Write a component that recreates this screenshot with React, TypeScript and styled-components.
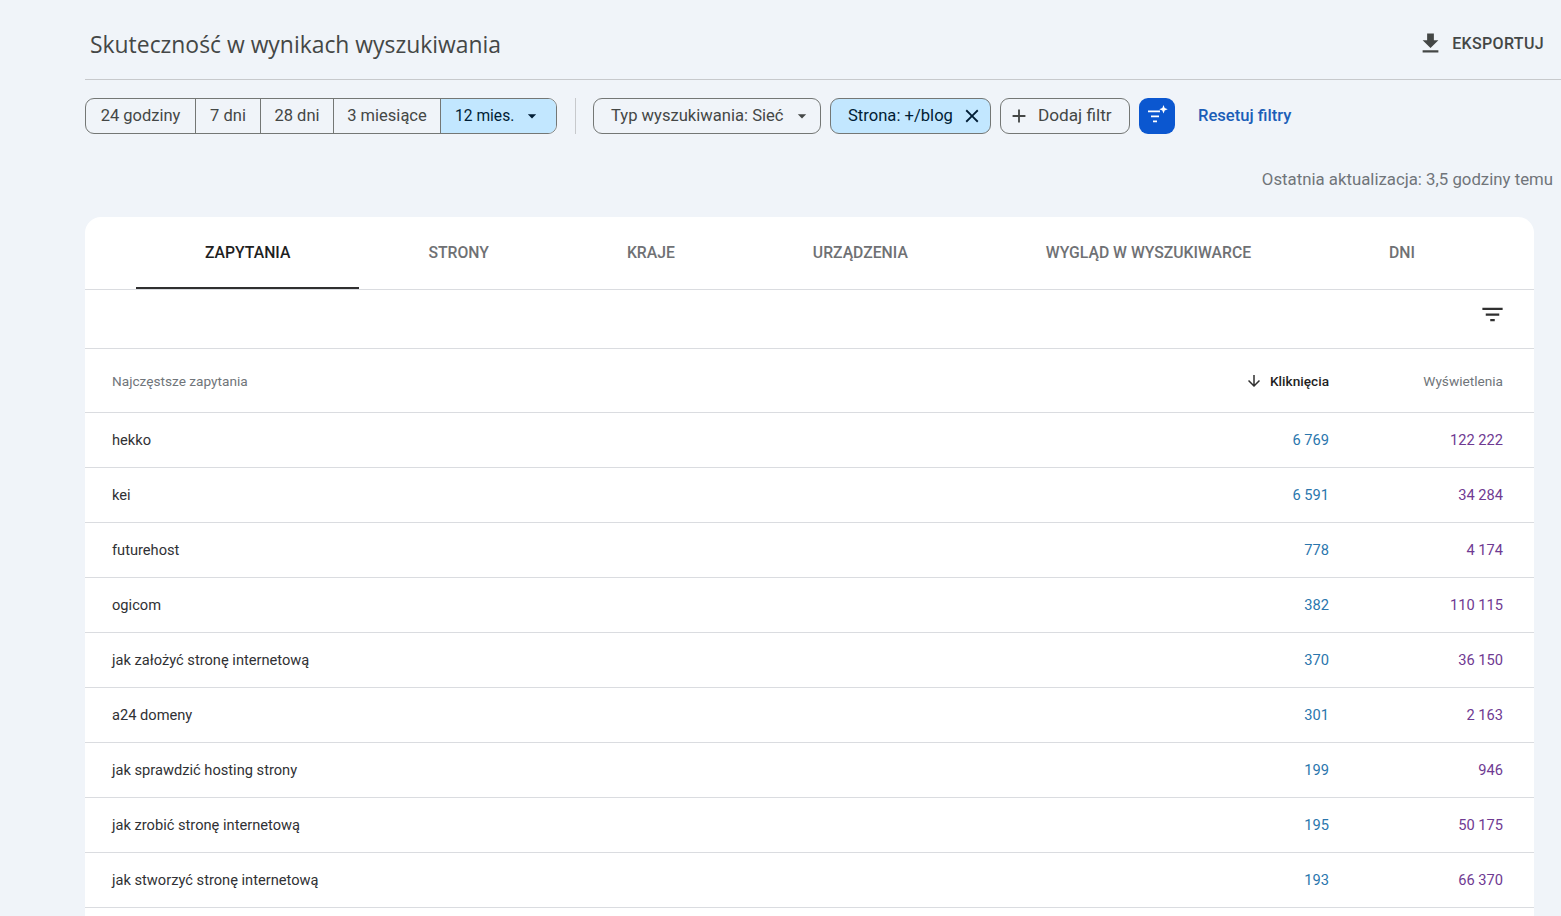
import styled, { createGlobalStyle } from 'styled-components'

const GlobalStyle = createGlobalStyle`
  html, body {
    margin: 0;
    height: 100%;
    overflow: hidden;
    background: #f0f4f9;
    font-family: Roboto, "Liberation Sans", sans-serif;
  }
`

const Page = styled.div`
  margin-left: 85px;
  height: 916px;
  display: flex;
  flex-direction: column;
`

const Header = styled.header`
  height: 80px;
  box-sizing: border-box;
  padding: 9px 17px 0 5px;
  border-bottom: 1px solid #c7c9cc;
  display: flex;
  align-items: center;
  justify-content: space-between;
  flex-shrink: 0;
`

const Title = styled.h1`
  margin: 0;
  font: 400 22.9px "Open Sans", sans-serif;
  color: #444746;
`

const ExportButton = styled.div`
  display: flex;
  align-items: center;
  gap: 8px;
  margin-top: -2px;
  font-size: 16px;
  font-weight: 500;
  letter-spacing: 0.35px;
  color: #444746;

  svg {
    width: 27px;
    height: 27px;
    fill: #444746;
  }
`

const FilterBar = styled.div`
  display: flex;
  align-items: center;
  margin-top: 18px;
  height: 36px;
  flex-shrink: 0;
`

const RangeGroup = styled.div`
  display: flex;
  height: 36px;
  box-sizing: border-box;
  border: 1px solid #747775;
  border-radius: 9px;
  overflow: hidden;
`

const RangeItem = styled.div<{ $width: number; $active?: boolean }>`
  width: ${(p) => p.$width}px;
  box-sizing: border-box;
  display: flex;
  align-items: center;
  justify-content: ${(p) => (p.$active ? 'flex-start' : 'center')};
  padding: ${(p) => (p.$active ? '0 0 0 14px' : '0 0 2px')};
  gap: 8px;
  font-size: ${(p) => (p.$active ? '15.6px' : '16.5px')};
  color: ${(p) => (p.$active ? '#001d35' : '#444746')};
  background: ${(p) => (p.$active ? '#c2e7ff' : 'transparent')};
  border-left: 1px solid #747775;

  &:first-child {
    border-left: none;
  }
`

const Divider = styled.div`
  width: 1px;
  height: 36px;
  background: #c7c9cc;
  margin: 0 17px 0 18px;
`

const Chip = styled.div<{ $width: number; $active?: boolean; $tight?: boolean }>`
  width: ${(p) => p.$width}px;
  height: 36px;
  box-sizing: border-box;
  margin-right: 9px;
  padding: 0 0 2px ${(p) => (p.$tight ? '7px' : '17px')};
  border: 1px solid #747775;
  border-radius: 9px;
  display: flex;
  align-items: center;
  gap: 8px;
  font-size: ${(p) => (p.$tight ? '17.2px' : '16.6px')};
  color: ${(p) => (p.$active ? '#001d35' : '#444746')};
  background: ${(p) => (p.$active ? '#c2e7ff' : 'transparent')};

  svg {
    margin-top: 2px;
  }
`

const Caret = styled.svg`
  width: 20px;
  height: 20px;
  fill: currentColor;
  flex-shrink: 0;
`

const ChipIcon = styled.svg`
  width: 22px;
  height: 22px;
  fill: currentColor;
  flex-shrink: 0;
`

const AiButton = styled.div`
  width: 36px;
  height: 36px;
  border-radius: 9px;
  background: #0b57d0;
  display: flex;
  align-items: center;
  justify-content: center;

  svg {
    width: 24px;
    height: 24px;
    fill: #ffffff;
  }
`

const ResetLink = styled.a`
  margin-left: 23px;
  padding-bottom: 2px;
  font-size: 16.6px;
  font-weight: 500;
  color: #1b5eb8;
`

const UpdatedNote = styled.div`
  margin-top: 35px;
  padding-right: 8px;
  text-align: right;
  font-size: 16.8px;
  line-height: 20px;
  color: #70757a;
  flex-shrink: 0;
`

const Card = styled.section`
  margin-top: 28px;
  width: 1449px;
  flex: 1;
  background: #ffffff;
  border-radius: 16px 16px 0 0;
`

const Tabs = styled.nav`
  display: flex;
  height: 73px;
  box-sizing: border-box;
  padding-left: 51px;
  border-bottom: 1px solid #dadce0;
`

const Tab = styled.div<{ $active?: boolean }>`
  height: 72px;
  box-sizing: border-box;
  padding: 0 69px;
  display: flex;
  align-items: center;
  font-size: 15.76px;
  font-weight: 500;
  color: ${(p) => (p.$active ? '#1f1f1f' : '#6f7174')};
  border-bottom: 2px solid ${(p) => (p.$active ? '#303030' : 'transparent')};
`

const Toolbar = styled.div`
  height: 59px;
  box-sizing: border-box;
  padding: 11px 28px 0 0;
  border-bottom: 1px solid #dadce0;
  display: flex;
  justify-content: flex-end;
  align-items: flex-start;

  svg {
    width: 27px;
    height: 27px;
    fill: #303030;
  }
`

const TableHead = styled.div`
  height: 64px;
  box-sizing: border-box;
  padding: 0 31px 0 27px;
  border-bottom: 1px solid #dadce0;
  display: grid;
  grid-template-columns: 1fr 220px 174px;
  align-items: center;
  font-size: 13.65px;
  color: #70757a;
`

const ActiveHead = styled.div`
  display: flex;
  align-items: center;
  justify-content: flex-end;
  gap: 7px;
  font-weight: 500;
  color: #1f1f1f;

  svg {
    width: 18px;
    height: 18px;
    fill: #303030;
  }
`

const NumberHead = styled.div`
  text-align: right;
`

const Row = styled.div`
  height: 55px;
  box-sizing: border-box;
  padding: 0 31px 0 27px;
  border-bottom: 1px solid #dadce0;
  display: grid;
  grid-template-columns: 1fr 220px 174px;
  align-items: center;
  font-size: 14.65px;
  color: #303134;
`

const Clicks = styled.div`
  text-align: right;
  color: #2a76ad;
`

const Impressions = styled.div`
  text-align: right;
  color: #6f3a92;
`

const rows = [
  ['hekko', '6\u00a0769', '122\u00a0222'],
  ['kei', '6\u00a0591', '34\u00a0284'],
  ['futurehost', '778', '4\u00a0174'],
  ['ogicom', '382', '110\u00a0115'],
  ['jak założyć stronę internetową', '370', '36\u00a0150'],
  ['a24 domeny', '301', '2\u00a0163'],
  ['jak sprawdzić hosting strony', '199', '946'],
  ['jak zrobić stronę internetową', '195', '50\u00a0175'],
  ['jak stworzyć stronę internetową', '193', '66\u00a0370'],
]

const tabs = ['ZAPYTANIA', 'STRONY', 'KRAJE', 'URZĄDZENIA', 'WYGLĄD W WYSZUKIWARCE', 'DNI']

export default function App() {
  return (
    <Page>
      <GlobalStyle />
      <Header>
        <Title>Skuteczność w wynikach wyszukiwania</Title>
        <ExportButton>
          <svg viewBox="0 0 24 24"><path d="M5 20h14v-2H5v2zM19 9h-4V3H9v6H5l7 7 7-7z" /></svg>
          EKSPORTUJ
        </ExportButton>
      </Header>

      <FilterBar>
        <RangeGroup>
          <RangeItem $width={109}>24 godziny</RangeItem>
          <RangeItem $width={65}>7 dni</RangeItem>
          <RangeItem $width={73}>28 dni</RangeItem>
          <RangeItem $width={107}>3 miesiące</RangeItem>
          <RangeItem $width={116} $active>
            12 mies.
            <Caret viewBox="0 0 24 24"><path d="M7 10l5 5 5-5z" /></Caret>
          </RangeItem>
        </RangeGroup>
        <Divider />
        <Chip $width={228}>
          Typ wyszukiwania: Sieć
          <Caret viewBox="0 0 24 24"><path d="M7 10l5 5 5-5z" /></Caret>
        </Chip>
        <Chip $width={161} $active>
          Strona: +/blog
          <ChipIcon viewBox="0 0 24 24"><path d="M19 6.41L17.59 5 12 10.59 6.41 5 5 6.41 10.59 12 5 17.59 6.41 19 12 13.41 17.59 19 19 17.59 13.41 12z" /></ChipIcon>
        </Chip>
        <Chip $width={130} $tight>
          <ChipIcon viewBox="0 0 24 24"><path d="M19 13h-6v6h-2v-6H5v-2h6V5h2v6h6v2z" /></ChipIcon>
          Dodaj filtr
        </Chip>
        <AiButton>
          <svg viewBox="0 0 24 24">
            <path d="M3 6.5h12v1.8H3zM6 11.5h8v1.8H6zM8 16.5h4v1.8H8z" />
            <path d="M18.5 1l1.2 3 3 1.2-3 1.2-1.2 3-1.2-3-3-1.2 3-1.2z" />
          </svg>
        </AiButton>
        <ResetLink>Resetuj filtry</ResetLink>
      </FilterBar>

      <UpdatedNote>Ostatnia aktualizacja: 3,5 godziny temu</UpdatedNote>

      <Card>
        <Tabs>
          {tabs.map((tab, i) => (
            <Tab key={tab} $active={i === 0}>{tab}</Tab>
          ))}
        </Tabs>
        <Toolbar>
          <svg viewBox="0 0 24 24"><path d="M10 18h4v-2h-4v2zM3 6v2h18V6H3zm3 7h12v-2H6v2z" /></svg>
        </Toolbar>
        <TableHead>
          <div>Najczęstsze zapytania</div>
          <ActiveHead>
            <svg viewBox="0 0 24 24"><path d="M20 12l-1.41-1.41L13 16.17V4h-2v12.17l-5.58-5.59L4 12l8 8 8-8z" /></svg>
            Kliknięcia
          </ActiveHead>
          <NumberHead>Wyświetlenia</NumberHead>
        </TableHead>
        {rows.map(([query, clicks, impressions]) => (
          <Row key={query}>
            <div>{query}</div>
            <Clicks>{clicks}</Clicks>
            <Impressions>{impressions}</Impressions>
          </Row>
        ))}
      </Card>
    </Page>
  )
}
